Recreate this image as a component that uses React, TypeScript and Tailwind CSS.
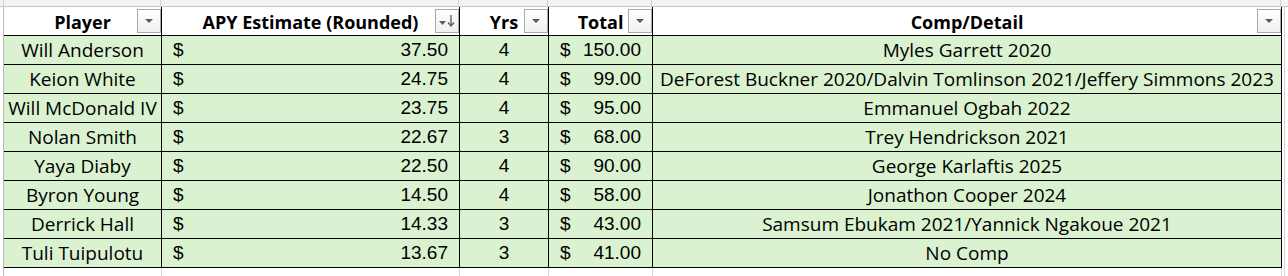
import React from "react";

type Row = {
  player: string;
  apy: string;
  yrs: number;
  total: string;
  comp: string;
};

const rows: Row[] = [
  { player: "Will Anderson", apy: "37.50", yrs: 4, total: "150.00", comp: "Myles Garrett 2020" },
  { player: "Keion White", apy: "24.75", yrs: 4, total: "99.00", comp: "DeForest Buckner 2020/Dalvin Tomlinson 2021/Jeffery Simmons 2023" },
  { player: "Will McDonald IV", apy: "23.75", yrs: 4, total: "95.00", comp: "Emmanuel Ogbah 2022" },
  { player: "Nolan Smith", apy: "22.67", yrs: 3, total: "68.00", comp: "Trey Hendrickson 2021" },
  { player: "Yaya Diaby", apy: "22.50", yrs: 4, total: "90.00", comp: "George Karlaftis 2025" },
  { player: "Byron Young", apy: "14.50", yrs: 4, total: "58.00", comp: "Jonathon Cooper 2024" },
  { player: "Derrick Hall", apy: "14.33", yrs: 3, total: "43.00", comp: "Samsum Ebukam 2021/Yannick Ngakoue 2021" },
  { player: "Tuli Tuipulotu", apy: "13.67", yrs: 3, total: "41.00", comp: "No Comp" },
];

const textFont = "font-['Open_Sans',sans-serif] text-[19px]";
const numFont = "font-['Liberation_Sans',Arial,sans-serif] text-[19px]";

function FilterButton({ sorted }: { sorted?: boolean }) {
  return (
    <div className="absolute right-0 top-[2px] w-[24px] h-[24px] border border-[#a9a9a9] bg-gradient-to-b from-white to-[#f0f0f0] flex items-center justify-center">
      {sorted ? (
        <svg width="18" height="14" viewBox="0 0 18 14">
          <path d="M1 7h7l-3.5 4z" fill="#5a5a5a" />
          <path d="M13 1v10" stroke="#5a5a5a" strokeWidth="1.3" />
          <path d="M10 8.5l3 3.5 3-3.5" stroke="#5a5a5a" strokeWidth="1.3" fill="none" />
        </svg>
      ) : (
        <svg width="10" height="6" viewBox="0 0 10 6">
          <path d="M1 1h8l-4 4z" fill="#5a5a5a" />
        </svg>
      )}
    </div>
  );
}

function HeaderCell({ label, w, sorted }: { label: string; w: string; sorted?: boolean }) {
  return (
    <div className={`relative ${w} h-full border-r border-black flex items-center justify-center`}>
      <span className="font-['Open_Sans',sans-serif] text-[18px] font-bold leading-[28px] pt-[2px] text-black">{label}</span>
      <FilterButton sorted={sorted} />
    </div>
  );
}

export default function App() {
  return (
    <div className="w-[1288px] h-[276px] bg-white overflow-hidden text-black">
      {/* row above, cut off */}
      <div className="h-[7px] bg-[#f3f3f3] border-b border-[#c8c8c8] flex pl-[3px]">
        <div className="w-[158px] border-l border-r border-[#d4d4d4]" />
        <div className="w-[298px] border-r border-[#d4d4d4]" />
        <div className="w-[89px] border-r border-[#d4d4d4]" />
        <div className="w-[104px] border-r border-[#d4d4d4]" />
        <div className="w-[629px] border-r border-[#d4d4d4]" />
      </div>

      <div className="flex pl-[3px]">
        <div className="border-l border-[#bdbdbd]">
          {/* header */}
          <div className="flex h-[29px] bg-white border-b border-black">
            <HeaderCell label="Player" w="w-[158px]" />
            <HeaderCell label="APY Estimate (Rounded)" w="w-[298px]" sorted />
            <HeaderCell label="Yrs" w="w-[89px]" />
            <HeaderCell label="Total" w="w-[104px]" />
            <HeaderCell label="Comp/Detail" w="w-[629px]" />
          </div>

          {rows.map((r) => (
            <div key={r.player} className="flex h-[29px] bg-[#daf2d0] border-b border-black leading-[28px]">
              <div className={`w-[158px] border-r border-black text-center whitespace-nowrap ${textFont}`}>{r.player}</div>
              <div className={`w-[298px] border-r border-black flex justify-between px-[11px] ${numFont}`}>
                <span>$</span>
                <span>{r.apy}</span>
              </div>
              <div className={`w-[89px] border-r border-black text-center ${numFont}`}>{r.yrs}</div>
              <div className={`w-[104px] border-r border-black flex justify-between px-[11px] ${numFont}`}>
                <span>$</span>
                <span>{r.total}</span>
              </div>
              <div className={`w-[629px] border-r border-black text-center whitespace-nowrap ${textFont}`}>{r.comp}</div>
            </div>
          ))}

          {/* empty row below */}
          <div className="flex h-[10px]">
            <div className="w-[158px] border-r border-[#d4d4d4]" />
            <div className="w-[298px] border-r border-[#d4d4d4]" />
            <div className="w-[89px] border-r border-[#d4d4d4]" />
            <div className="w-[104px] border-r border-[#d4d4d4]" />
            <div className="w-[629px] border-r border-[#d4d4d4]" />
          </div>
        </div>
        <div className="w-[3px] border-r border-[#d4d4d4]" />
      </div>
    </div>
  );
}
